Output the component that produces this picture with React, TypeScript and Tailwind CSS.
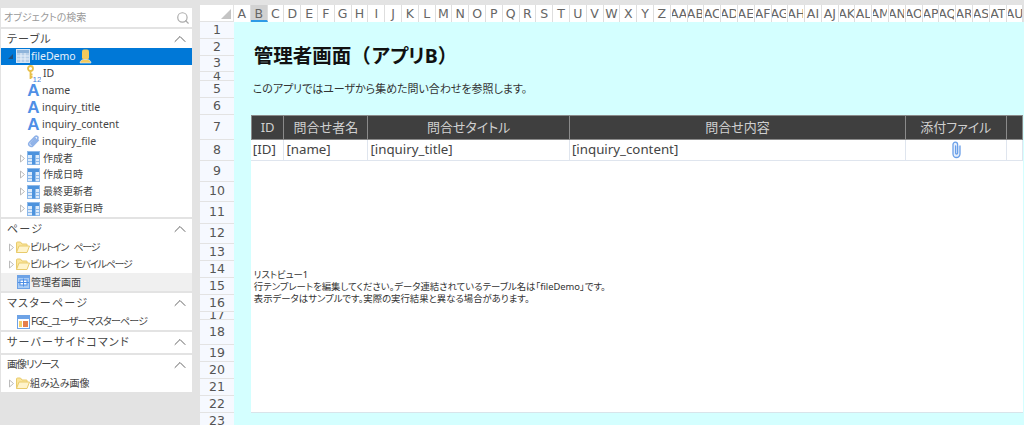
import { ChevronUp, Search } from "lucide-react";

const FONT = "font-['Noto_Sans','Noto_Sans_CJK_JP',sans-serif] [font-feature-settings:'palt']";

const columnLabels = (() => {
  const alpha = "ABCDEFGHIJKLMNOPQRSTUVWXYZ".split("");
  return [...alpha, ...alpha.slice(0, 21).map((c) => "A" + c)];
})();

const rowHeights = [17, 17, 16, 9, 17, 17, 25, 21, 21, 20, 22, 20, 17, 17, 17, 17, 8, 25, 17, 17, 17, 17, 17];

// ---- icons ----
function TableIcon() {
  return (
    <svg width="14" height="14" viewBox="0 0 14 14" className="shrink-0">
      <rect x="0.5" y="0.5" width="13" height="13" fill="#b7cfe8" stroke="#d7e5f4" />
      <rect x="1" y="1" width="12" height="3" fill="#8fb4da" />
      <path d="M1 7h12M1 10h12M5 4v9M9 4v9" stroke="#e8f0f9" strokeWidth="1" />
    </svg>
  );
}

function ColumnIcon() {
  return (
    <svg width="13" height="14" viewBox="0 0 13 14" className="shrink-0">
      <rect x="0.5" y="0.5" width="12" height="13" fill="#dcebfb" stroke="#8db9ea" />
      <rect x="1" y="1" width="11" height="3" fill="#4d93dd" />
      <rect x="5" y="4" width="3.5" height="9.5" fill="#4d93dd" />
      <path d="M1 7.5h4M8.5 7.5h4M1 10.5h4M8.5 10.5h4" stroke="#8db9ea" />
    </svg>
  );
}

function KeyIcon() {
  return (
    <svg width="14" height="17" viewBox="0 0 14 17" className="shrink-0">
      <circle cx="3.5" cy="3.5" r="2.5" fill="#fff" stroke="#e8c04a" strokeWidth="1.8" />
      <path d="M3.5 6v8M3.5 9.5h2M3.5 12h2" stroke="#e8c04a" strokeWidth="1.8" fill="none" />
      <text x="5.5" y="16.5" fontSize="8" fill="#3f86dc" fontFamily="Liberation Sans, sans-serif">12</text>
    </svg>
  );
}

function LetterIcon() {
  return (
    <span className="w-[13px] shrink-0 text-center font-['Liberation_Sans',sans-serif] text-[17px] leading-[17px] font-bold text-[#4f8fe6]">A</span>
  );
}

function ClipIcon() {
  return (
    <svg width="13" height="13" viewBox="0 0 13 13" className="shrink-0">
      <path d="M11.3 5.2 6 10.6a2.4 2.4 0 0 1-3.5-3.4l5.6-5.6a1.7 1.7 0 0 1 2.4 2.4L5.2 9.3a.9.9 0 0 1-1.2-1.2L8.5 3.6" fill="none" stroke="#8fb2e8" strokeWidth="1.6" strokeLinecap="round" />
    </svg>
  );
}

function FolderIcon() {
  return (
    <svg width="14" height="13" viewBox="0 0 14 13" className="shrink-0">
      <path d="M.5 11.5V2a1 1 0 0 1 1-1h3l1.5 2h4.5a.6.6 0 0 1 .6.6V5" fill="#fbe59a" stroke="#e8cb6c" />
      <path d="M.5 11.5 3 5h10.5l-2.5 6.5Z" fill="#fff4cc" stroke="#e8cb6c" strokeLinejoin="round" />
    </svg>
  );
}

function PageIcon() {
  return (
    <svg width="13" height="14" viewBox="0 0 13 14" className="shrink-0">
      <rect x="0.5" y="0.5" width="12" height="13" fill="#a9ccf5" stroke="#6ea3e6" />
      <rect x="1" y="1" width="11" height="2" fill="#6ea3e6" />
      <rect x="3" y="5" width="7" height="5" fill="#fff" stroke="#4f8fe6" />
      <path d="M1 7.500h11M6.500 3.500v8" stroke="#4f8fe6" strokeWidth="1" />
    </svg>
  );
}

function MasterIcon() {
  return (
    <svg width="13" height="14" viewBox="0 0 13 14" className="shrink-0">
      <rect x="0.5" y="0.5" width="12" height="13" fill="#fff" stroke="#6ea3e6" />
      <rect x="1" y="1" width="11" height="3" fill="#6ea3e6" />
      <rect x="2" y="6" width="3" height="6" fill="#f4d06a" />
      <rect x="6" y="6" width="5" height="6" fill="#e57f4c" />
    </svg>
  );
}

function UserBadge() {
  return (
    <svg width="13" height="15" viewBox="0 0 13 15" className="shrink-0">
      <rect x="3" y="0.5" width="7" height="10" rx="2" fill="#f3c95c" />
      <path d="M1 14c0-2 2-3.500 3.500-3.500h4C10 10.500 12 12 12 14Z" fill="#f3c95c" stroke="#e8f0f8" strokeWidth="0.6" />
    </svg>
  );
}

function Arrow({ open }: { open?: boolean }) {
  if (open) {
    return (
      <svg width="7" height="7" viewBox="0 0 7 7" className="shrink-0">
        <path d="M6 1v5H1Z" fill="#1f4e7d" />
      </svg>
    );
  }
  return (
    <svg width="7" height="9" viewBox="0 0 7 9" className="shrink-0">
      <path d="M1.500 1 5.500 4.500 1.500 8Z" fill="#fff" stroke="#bbb" />
    </svg>
  );
}

// ---- sidebar ----
function SectionHeader({ title, className = "text-[11px] tracking-[1.2px]" }: { title: string; className?: string }) {
  return (
    <div className="flex h-[20px] items-center justify-between pr-[2px] pl-[6px] text-[#444]">
      <span className={className}>{title}</span>
      <ChevronUp size={20} strokeWidth={1.2} className="text-[#666]" />
    </div>
  );
}

function Row({ children, className = "" }: { children: React.ReactNode; className?: string }) {
  return <div className={"flex h-[17px] items-center text-[10.3px] whitespace-nowrap text-[#444] " + className}>{children}</div>;
}

function Sidebar() {
  const fields = [
    { name: "ID", icon: <KeyIcon /> },
    { name: "name", icon: <LetterIcon /> },
    { name: "inquiry_title", icon: <LetterIcon /> },
    { name: "inquiry_content", icon: <LetterIcon /> },
    { name: "inquiry_file", icon: <ClipIcon /> },
  ];
  return (
    <aside className="flex w-[192px] shrink-0 flex-col gap-[2px] pt-[8px] pl-[1px]">
      <div className="flex h-[19px] items-center justify-between bg-white pr-[2px] pl-[3px] text-[10px] text-[#999]">
        <span>オブジェクトの検索</span>
        <Search size={14} strokeWidth={2} className="text-[#aaa]" />
      </div>

      <section className="flex h-[188px] flex-col overflow-hidden bg-white">
        <div className="-mb-[1px]">
          <SectionHeader title="テーブル" />
        </div>
        <Row className="bg-[#0078d7] pl-[6px] text-[#e6f1fb]">
          <Arrow open />
          <span className="ml-[2px]"><TableIcon /></span>
          <span className="ml-[1px] text-[10.5px]">fileDemo</span>
          <span className="ml-[3px]"><UserBadge /></span>
        </Row>
        {fields.map((f) => (
          <Row key={f.name} className="h-[16.9px] gap-[2px] pl-[26px]">
            {f.icon}
            <span className="pt-[1px] text-[10.5px]">{f.name}</span>
          </Row>
        ))}
        {["作成者", "作成日時", "最終更新者", "最終更新日時"].map((n) => (
          <Row key={n} className="h-[16.9px] pl-[18px]">
            <span className="w-[7px]"><Arrow /></span>
            <span className="ml-[1px]"><ColumnIcon /></span>
            <span className="ml-[3px] text-[10px]">{n}</span>
          </Row>
        ))}
      </section>

      <section className="h-[72px] bg-white">
        <SectionHeader title="ページ" />
        {["ビルトイン ページ", "ビルトイン モバイルページ"].map((n) => (
          <Row key={n} className="pl-[7px]">
            <Arrow />
            <span className="ml-[1px]"><FolderIcon /></span>
            <span className="text-[10px] tracking-[-1.2px] [word-spacing:4px]">{n}</span>
          </Row>
        ))}
        <Row className="h-[18px] gap-[1px] bg-[#f0f0f0] pl-[16px]">
          <PageIcon />
          <span className="text-[10px]">管理者画面</span>
        </Row>
      </section>

      <section className="h-[37px] bg-white">
        <SectionHeader title="マスターページ" />
        <Row className="gap-[1px] pl-[16px]">
          <MasterIcon />
          <span className="text-[10px] tracking-[-0.8px]">FGC_ユーザーマスターページ</span>
        </Row>
      </section>

      <section className="h-[21px] bg-white">
        <SectionHeader title="サーバーサイドコマンド" />
      </section>

      <section className="h-[37px] bg-white">
        <SectionHeader title="画像リソース" className="text-[10.5px] tracking-[-1px]" />
        <Row className="pl-[7px]">
          <Arrow />
          <span className="ml-[1px]"><FolderIcon /></span>
          <span className="text-[10px]">組み込み画像</span>
        </Row>
      </section>
    </aside>
  );
}

// ---- sheet ----
function HeaderCell({ label, className }: { label: string; className: string }) {
  return (
    <div className={"row-start-7 flex items-center justify-center border-t border-r border-b border-[#8a8a8a] bg-[#3f3f3f] text-[13px] text-[#cfcfcf] " + className}>
      {label}
    </div>
  );
}

function BodyCell({ children, className }: { children?: React.ReactNode; className: string }) {
  return (
    <div className={"row-start-8 flex items-center overflow-hidden border-r border-b border-[#dfe5ee] bg-white pl-[2px] text-[13.3px] whitespace-nowrap text-[#444] " + className}>
      {children}
    </div>
  );
}

function Sheet() {
  return (
    <div className="flex min-w-0 flex-1 flex-col">
      <div className="flex h-[17px] shrink-0">
        <div className="flex w-[34px] shrink-0 items-end justify-end border-r border-b border-[#e3e3e3] bg-white pr-[2px] pb-[2px]">
          <svg width="10" height="10" viewBox="0 0 10 10">
            <path d="M10 0v10H0Z" fill="#c4c4c4" />
          </svg>
        </div>
        {columnLabels.map((c) => (
          <div
            key={c}
            className={
              "flex w-[16.8px] shrink-0 justify-center border-r border-[#dedede] font-['DejaVu_Sans',sans-serif] text-[12.5px] leading-[17px] whitespace-nowrap text-[#666] " +
              (c === "B" ? "border-b-2 border-b-[#2e9be6] bg-[#d2d2d2]" : "bg-white")
            }
          >
            <div className="flex w-[14px] shrink-0 justify-center overflow-hidden">{c}</div>
          </div>
        ))}
      </div>
      <div className="flex flex-1">
        <div className="flex w-[34px] shrink-0 flex-col">
          {rowHeights.map((h, i) => (
            <div
              key={i}
              className="flex shrink-0 items-center justify-center overflow-hidden border-b border-[#e3e3e3] bg-[#f6f9ff] font-['DejaVu_Sans',sans-serif] text-[12.5px] text-[#555]"
              style={{ height: h }}
            >
              {i + 1}
            </div>
          ))}
        </div>
        <div className="grid flex-1 grid-cols-[repeat(47,16.8px)] grid-rows-[17px_17px_16px_9px_17px_17px_25px_21px_252px] content-start bg-[#d4ffff]">
          <h1 className="col-start-2 col-end-48 row-start-1 row-end-4 flex items-center pt-[18px] pl-[3px] text-[19.5px] leading-none font-bold text-[#111]">
            <span className="[font-feature-settings:normal]">管理者画面（</span>
            <span className="ml-[1px]">アプリB</span>
            <span className="[font-feature-settings:normal]">）</span>
          </h1>
          <p className="col-start-2 col-end-48 row-start-5 flex items-center pl-[2px] text-[11px] tracking-[-0.03px] text-[#333]">
            このアプリではユーザから集めた問い合わせを参照します。
          </p>
          <HeaderCell label="ID" className="col-start-2 col-span-2 border-l" />
          <HeaderCell label="問合せ者名" className="col-start-4 col-span-5" />
          <HeaderCell label="問合せタイトル" className="col-start-9 col-span-12" />
          <HeaderCell label="問合せ内容" className="col-start-21 col-span-20" />
          <HeaderCell label="添付ファイル" className="col-start-41 col-span-6" />
          <HeaderCell label="" className="col-start-47 col-span-1" />
          <BodyCell className="col-start-2 col-span-2">[ID]</BodyCell>
          <BodyCell className="col-start-4 col-span-5">[name]</BodyCell>
          <BodyCell className="col-start-9 col-span-12">[inquiry_title]</BodyCell>
          <BodyCell className="col-start-21 col-span-20">[inquiry_content]</BodyCell>
          <BodyCell className="col-start-41 col-span-6 justify-center">
            <svg width="11" height="18" viewBox="0 0 11 18" className="shrink-0">
              <path d="M9 5v8a3.500 3.500 0 0 1-7 0V3.500a2.300 2.300 0 0 1 4.600 0V12a1 1 0 0 1-2 0V5" fill="#e6effc" stroke="#6a9fe8" strokeWidth="1.3" strokeLinecap="round" />
            </svg>
          </BodyCell>
          <BodyCell className="col-start-47 col-span-1" />
          <div className="col-start-2 col-end-48 row-start-9 border-b border-[#d8e4ea] bg-white pt-[108px] pl-[3px] text-[9.4px] leading-[12px] text-[#333]">
            <div>リストビュー1</div>
            <div>行テンプレートを編集してください。データ連結されているテーブル名は「fileDemo」です。</div>
            <div>表示データはサンプルです。実際の実行結果と異なる場合があります。</div>
          </div>
        </div>
      </div>
    </div>
  );
}

export default function App() {
  return (
    <div className={"flex h-[425px] w-[1024px] gap-[8px] overflow-hidden bg-[#e3e3e3] " + FONT}>
      <Sidebar />
      <div className="flex min-w-0 flex-1 pt-[5px]">
        <Sheet />
      </div>
    </div>
  );
}
